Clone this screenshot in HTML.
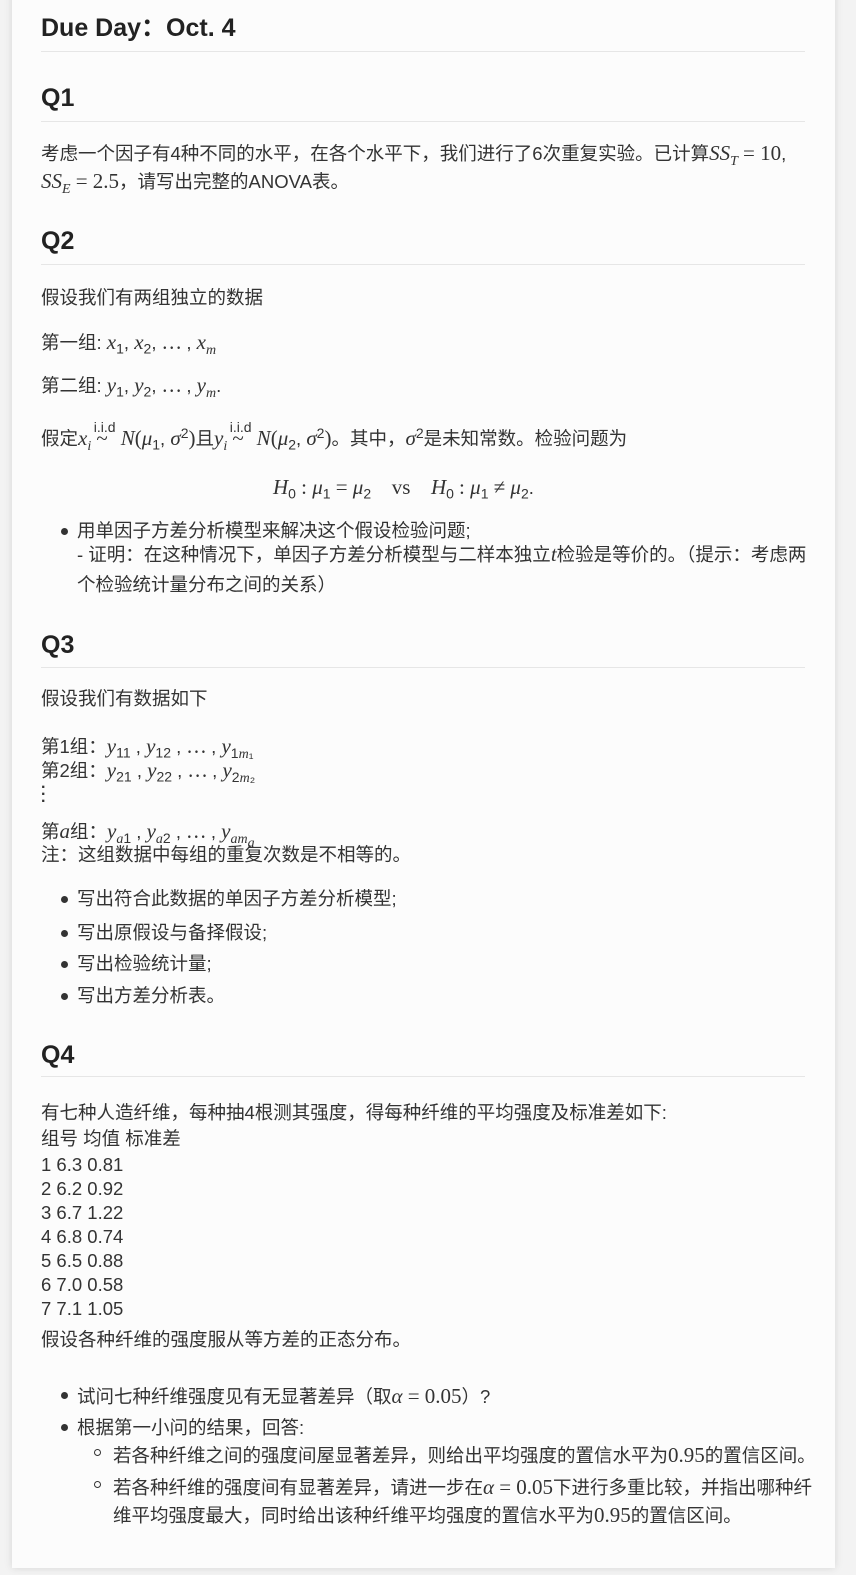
<!DOCTYPE html>
<html><head><meta charset="utf-8"><style>
body{margin:0;width:856px;height:1575px;background:#f3f3f3;position:relative;overflow:hidden;font-family:"Liberation Sans","Noto Sans CJK SC",sans-serif;color:#333;font-size:18.5px}
.card{position:absolute;left:12px;top:-10px;width:823px;height:1578px;background:#fcfcfc;box-shadow:0 0 8px rgba(0,0,0,.12)}
.l{position:absolute;left:41px;line-height:26px;height:26px;white-space:nowrap}
.h{position:absolute;left:41px;font-size:25px;font-weight:bold;line-height:32px;color:#222}
.hr{position:absolute;left:41px;width:764px;height:1px;background:#e6e6e6}
.m{font-family:"Liberation Serif",serif;font-size:21px}
i{font-family:"Liberation Serif",serif;font-size:21px}
sub,sup{font-size:14px;line-height:0}
.b{position:absolute;left:61px;width:7px;height:7px;border-radius:50%;background:#333}
.c{position:absolute;left:94px;width:5px;height:5px;border-radius:50%;border:1px solid #333}
</style></head><body>
<div class="card"></div>
<div class="h" style="top:12px">Due Day：Oct. 4</div>
<div class="hr" style="top:51px"></div>
<div class="h" style="top:82px">Q1</div>
<div class="hr" style="top:121px"></div>
<div class="l" style="top:140px">考虑一个因子有4种不同的水平，在各个水平下，我们进行了6次重复实验。已计算<i>SS<sub>T</sub></i> <span class="m">= 10</span>,</div>
<div class="l" style="top:168px"><i>SS<sub>E</sub></i> <span class="m">= 2.5</span>，请写出完整的ANOVA表。</div>
<div class="h" style="top:225px">Q2</div>
<div class="hr" style="top:264px"></div>
<div class="l" style="top:285px">假设我们有两组独立的数据</div>
<div class="l" style="top:329px">第一组: <i>x</i><sub>1</sub>, <i>x</i><sub>2</sub>, ⋯ , <i>x<sub>m</sub></i></div>
<div class="l" style="top:372px">第二组: <i>y</i><sub>1</sub>, <i>y</i><sub>2</sub>, ⋯ , <i>y<sub>m</sub></i>.</div>
<div class="l" style="top:425px">假定<i>x<sub>i</sub></i> <span class="m">~</span><sup style="margin-left:-14px;position:relative;top:-6px">i.i.d</sup> <i>N</i><span class="m">(</span><i>μ</i><sub>1</sub>, <i>σ</i><sup>2</sup><span class="m">)</span>且<i>y<sub>i</sub></i> <span class="m">~</span><sup style="margin-left:-14px;position:relative;top:-6px">i.i.d</sup> <i>N</i><span class="m">(</span><i>μ</i><sub>2</sub>, <i>σ</i><sup>2</sup><span class="m">)</span>。其中，<i>σ</i><sup>2</sup>是未知常数。检验问题为</div>
<div class="l" style="top:474px;left:273px"><i>H</i><sub>0</sub> <span class="m">: </span><i>μ</i><sub>1</sub> <span class="m">= </span><i>μ</i><sub>2</sub> &nbsp;&nbsp; <span class="m">vs</span> &nbsp;&nbsp; <i>H</i><sub>0</sub> <span class="m">: </span><i>μ</i><sub>1</sub> <span class="m">≠ </span><i>μ</i><sub>2</sub>.</div>
<div class="b" style="top:528px"></div>
<div class="l" style="top:518px;left:77px">用单因子方差分析模型来解决这个假设检验问题;</div>
<div class="l" style="top:541px;left:77px">- 证明：在这种情况下，单因子方差分析模型与二样本独立<i>t</i>检验是等价的。（提示：考虑两</div>
<div class="l" style="top:572px;left:77px">个检验统计量分布之间的关系）</div>
<div class="h" style="top:629px">Q3</div>
<div class="hr" style="top:667px"></div>
<div class="l" style="top:686px">假设我们有数据如下</div>
<div class="l" style="top:733px">第1组：<i>y</i><sub>11</sub> , <i>y</i><sub>12</sub> , ⋯ , <i>y</i><sub>1<i style="font-size:14px">m</i>₁</sub></div>
<div class="l" style="top:757px">第2组：<i>y</i><sub>21</sub> , <i>y</i><sub>22</sub> , ⋯ , <i>y</i><sub>2<i style="font-size:14px">m</i>₂</sub></div>
<div class="l" style="top:784px;font-size:16px;line-height:7px;font-weight:bold">·<br>·<br>·</div>
<div class="l" style="top:818px">第<i>a</i>组：<i>y</i><sub><i style="font-size:14px">a</i>1</sub> , <i>y</i><sub><i style="font-size:14px">a</i>2</sub> , ⋯ , <i>y</i><sub><i style="font-size:14px">am<sub>a</sub></i></sub></div>
<div class="l" style="top:842px">注：这组数据中每组的重复次数是不相等的。</div>
<div class="b" style="top:896px"></div><div class="l" style="top:886px;left:77px">写出符合此数据的单因子方差分析模型;</div>
<div class="b" style="top:930px"></div><div class="l" style="top:920px;left:77px">写出原假设与备择假设;</div>
<div class="b" style="top:961px"></div><div class="l" style="top:951px;left:77px">写出检验统计量;</div>
<div class="b" style="top:993px"></div><div class="l" style="top:983px;left:77px">写出方差分析表。</div>
<div class="h" style="top:1039px">Q4</div>
<div class="hr" style="top:1076px"></div>
<div class="l" style="top:1100px">有七种人造纤维，每种抽4根测其强度，得每种纤维的平均强度及标准差如下:</div>
<div class="l" style="top:1126px">组号 均值 标准差</div>
<div class="l" style="top:1152px">1 6.3 0.81</div>
<div class="l" style="top:1176px">2 6.2 0.92</div>
<div class="l" style="top:1200px">3 6.7 1.22</div>
<div class="l" style="top:1224px">4 6.8 0.74</div>
<div class="l" style="top:1248px">5 6.5 0.88</div>
<div class="l" style="top:1272px">6 7.0 0.58</div>
<div class="l" style="top:1296px">7 7.1 1.05</div>
<div class="l" style="top:1327px">假设各种纤维的强度服从等方差的正态分布。</div>
<div class="b" style="top:1392px"></div><div class="l" style="top:1383px;left:77px">试问七种纤维强度见有无显著差异（取<i>α</i> <span class="m">= 0.05</span>）?</div>
<div class="b" style="top:1424px"></div><div class="l" style="top:1415px;left:77px">根据第一小问的结果，回答:</div>
<div class="c" style="top:1449px"></div><div class="l" style="top:1442px;left:113px">若各种纤维之间的强度间屋显著差异，则给出平均强度的置信水平为<span class="m">0.95</span>的置信区间。</div>
<div class="c" style="top:1481px"></div><div class="l" style="top:1474px;left:113px">若各种纤维的强度间有显著差异，请进一步在<i>α</i> <span class="m">= 0.05</span>下进行多重比较，并指出哪种纤</div>
<div class="l" style="top:1502px;left:113px">维平均强度最大，同时给出该种纤维平均强度的置信水平为<span class="m">0.95</span>的置信区间。</div>
</body></html>
